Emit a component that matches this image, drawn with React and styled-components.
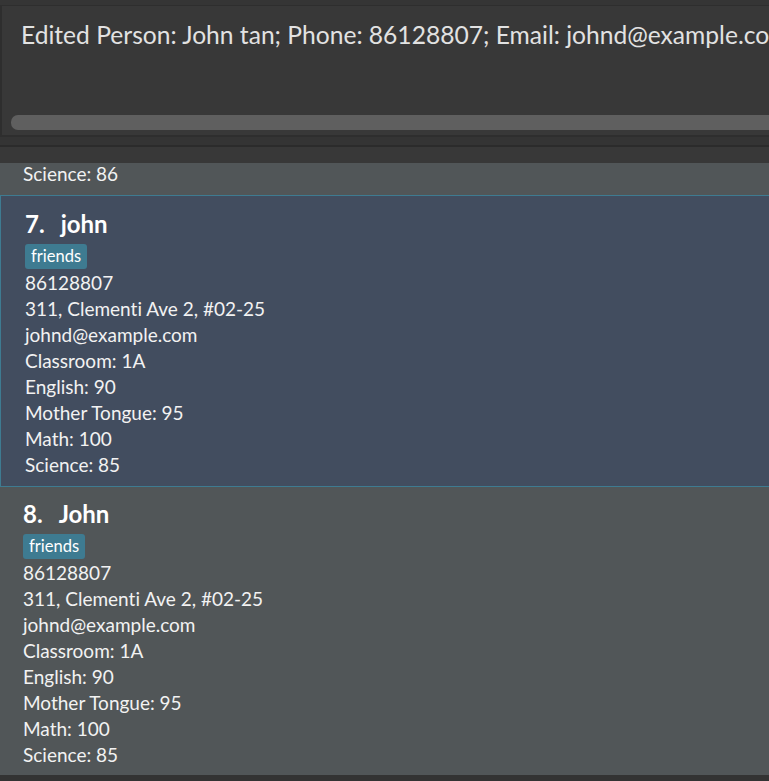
import React from 'react'
import styled, { createGlobalStyle } from 'styled-components'

const GlobalStyle = createGlobalStyle`
  html, body {
    margin: 0;
    padding: 0;
    background: #383838;
    overflow: hidden;
  }
  body {
    font-family: Lato, "Open Sans", sans-serif;
    font-variant-ligatures: none;
  }
`

const people = [
  {
    index: 7,
    name: 'john',
    selected: true,
    tags: ['friends'],
    fields: [
      '86128807',
      '311, Clementi Ave 2, #02-25',
      'johnd@example.com',
      'Classroom: 1A',
      'English: 90',
      'Mother Tongue: 95',
      'Math: 100',
      'Science: 85',
    ],
  },
  {
    index: 8,
    name: 'John',
    selected: false,
    tags: ['friends'],
    fields: [
      '86128807',
      '311, Clementi Ave 2, #02-25',
      'johnd@example.com',
      'Classroom: 1A',
      'English: 90',
      'Mother Tongue: 95',
      'Math: 100',
      'Science: 85',
    ],
  },
]

function PersonCard({ person }) {
  return (
    <Card selected={person.selected}>
      <Name>
        <span>{person.index}.</span>
        <span>{person.name}</span>
      </Name>
      <Tags>
        {person.tags.map((t) => (
          <Tag key={t}>{t}</Tag>
        ))}
      </Tags>
      {person.fields.map((f, i) => (
        <Field key={i}>{f}</Field>
      ))}
    </Card>
  )
}

export default function App() {
  return (
    <>
      <GlobalStyle />
      <Window>
        <ResultPane>
          <ResultBox>
            <ResultText>
              Edited Person: John tan; Phone: 86128807; Email: johnd@example.com; Address: 311, Clementi Ave 2, #02-25
            </ResultText>
            <ScrollTrack>
              <ScrollThumb />
            </ScrollTrack>
          </ResultBox>
        </ResultPane>
        <Divider />
        <ListView>
          <TailCard>
            <Field>Science: 86</Field>
          </TailCard>
          {people.map((p) => (
            <PersonCard key={p.index} person={p} />
          ))}
        </ListView>
        <Footer />
      </Window>
    </>
  )
}

const Window = styled.div`
  width: 769px;
  height: 781px;
  display: flex;
  flex-direction: column;
  background: #383838;
  overflow: hidden;
`

const ResultPane = styled.div`
  padding-top: 5px;
  background: #353535;
`

const ResultBox = styled.div`
  height: 132px;
  box-sizing: border-box;
  background: #383838;
  border-top: 1px solid #2e2e2e;
  border-left: 2px solid #2e2e2e;
  border-bottom: 2px solid #2e2e2e;
  display: flex;
  flex-direction: column;
  justify-content: space-between;
  padding: 12px 0 5px 9px;
  overflow: hidden;
`

const ResultText = styled.div`
  color: #e2e2e2;
  font-size: 24.6px;
  line-height: 34px;
  white-space: nowrap;
  padding-left: 10px;
`

const ScrollTrack = styled.div`
  height: 16px;
  display: flex;
  align-items: center;
`

const ScrollThumb = styled.div`
  flex: 1;
  height: 15px;
  margin-right: -20px;
  border-radius: 7px;
  background: #5f5f5f;
`

const Divider = styled.div`
  height: 26px;
  box-sizing: border-box;
  background: #383838;
  border-top: 8px solid #343434;
  border-bottom: 16px solid #383838;
  background-clip: padding-box;
  &::after {
    content: '';
    display: block;
    height: 2px;
    background: #2b2b2b;
  }
`

const ListView = styled.div`
  flex: 0 0 auto;
  background: #515658;
  display: flex;
  flex-direction: column;
`

const TailCard = styled.div`
  padding: 0 0 10px 23px;
  & > div {
    line-height: 22px;
  }
`

const Card = styled.div`
  box-sizing: border-box;
  padding: ${(p) => (p.selected ? '13px 0 8px 24px' : '12px 0 7px 23px')};
  background: ${(p) => (p.selected ? '#424d5f' : '#515658')};
  border: ${(p) => (p.selected ? '1px solid #3e7b91' : 'none')};
  border-right: none;
`

const Name = styled.div`
  display: flex;
  gap: 16px;
  color: #ffffff;
  font-size: 24px;
  font-weight: 700;
  line-height: 30px;
  white-space: nowrap;
`

const Tags = styled.div`
  display: flex;
  gap: 5px;
  margin: 5px 0 1px;
`

const Tag = styled.span`
  background: #3e7b91;
  color: #ffffff;
  font-size: 16.5px;
  line-height: 25px;
  height: 25px;
  padding: 0 6px;
  border-radius: 3px;
`

const Field = styled.div`
  color: #f2f2f2;
  font-size: 19px;
  line-height: 26px;
  white-space: nowrap;
`

const Footer = styled.div`
  flex: 1;
  background: #333333;
`
